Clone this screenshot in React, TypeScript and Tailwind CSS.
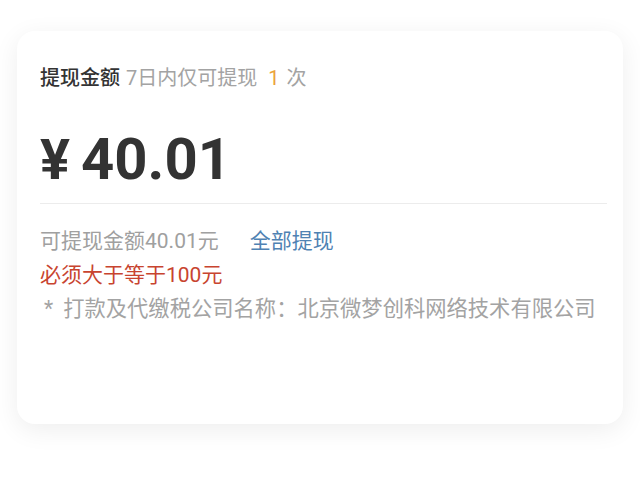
const cjk = "font-['Roboto','Noto_Sans_CJK_SC',sans-serif]";

export default function App() {
  return (
    <div className={`min-h-screen w-full bg-white pt-[31px] px-[17px] ${cjk}`}>
      <div className="h-[393px] rounded-[18px] bg-white shadow-[0_6px_26px_rgba(0,0,0,0.07)] pt-[33px] pl-[23px] pr-[16px]">
        <div className="flex items-baseline text-[20px] leading-[28px] text-[#333]">
          <span className="font-medium">提现金额</span>
          <span className="ml-[6px] text-[#a3a3a3]">7日内仅可提现</span>
          <span className="ml-[11px] text-[#eba33a]">1</span>
          <span className="ml-[7px] text-[#a3a3a3]">次</span>
        </div>

        <div className="mt-[37px] flex items-baseline text-[58px] leading-[60px] font-bold text-[#333]">
          <span className="text-[56px] mr-[11px]">¥</span>
          <span>40.01</span>
        </div>

        <div className="mt-[13px] h-px bg-[#ececec]" />

        <div className="mt-[20px] text-[21px] leading-[34px]">
          <div className="flex text-[#a0a0a0]">
            <span>可提现金额40.01元</span>
            <span className="ml-[31px] text-[#4f82b3]">全部提现</span>
          </div>
          <div className="text-[#c8442f]">必须大于等于100元</div>
          <div className="flex pl-[4px] text-[21.3px] text-[#a3a3a3]">
            <span>*</span>
            <span className="ml-[10px]">打款及代缴税公司名称：北京微梦创科网络技术有限公司</span>
          </div>
        </div>
      </div>
    </div>
  );
}
